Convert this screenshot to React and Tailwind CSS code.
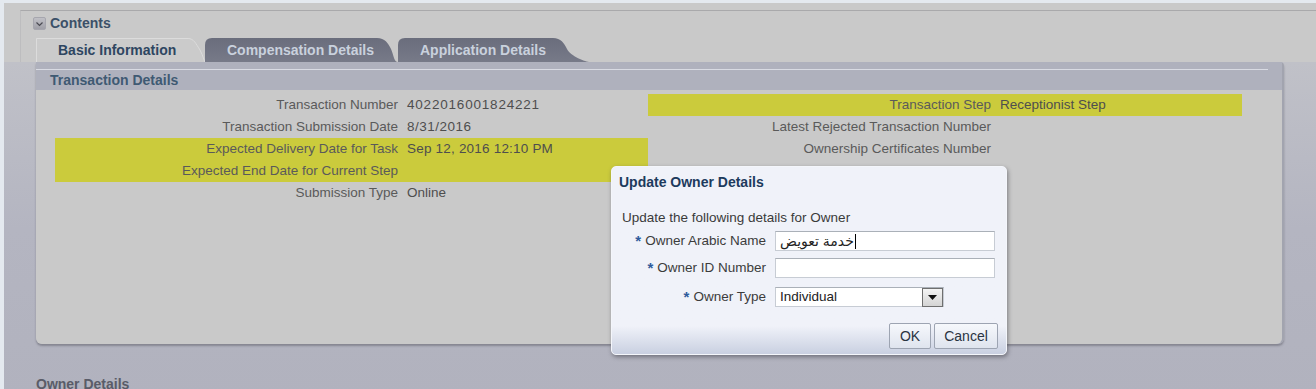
import React from "react";

function DarkTab({ width, label, curveStart }) {
  const w = width;
  const cs = curveStart;
  return (
    <div className="relative h-[24px] shrink-0" style={{ width: w }}>
      <svg className="absolute inset-0" width={w} height="24" viewBox={`0 0 ${w} 24`}>
        <defs>
          <linearGradient id={`g${w}`} x1="0" y1="0" x2="0" y2="1">
            <stop offset="0" stopColor="#6a6d7c" />
            <stop offset="1" stopColor="#777a88" />
          </linearGradient>
        </defs>
        <path
          d={`M0,24 V7 Q0,0 7,0 H${cs} C${cs + 8},0 ${cs + 11},5 ${cs + 14},11 C${cs + 17},18 ${w - 4},24 ${w},24 Z`}
          fill={`url(#g${w})`}
        />
      </svg>
      <div className="relative flex h-full items-center pl-[22px] pt-[1px] text-[14px] font-bold text-[#c9d1dd]">
        {label}
      </div>
    </div>
  );
}

function Row({ label, value, yellow, tracking = "" }) {
  return (
    <div className={`flex h-[22px] items-center ${yellow ? "bg-[#cbcb3c]" : ""}`}>
      <div className="w-[343px] shrink-0 text-right text-[#5a5a5a]">{label}</div>
      <div className={`pl-[9px] text-[#4e4e4e] ${tracking}`}>{value}</div>
    </div>
  );
}

function FieldLabel({ text }) {
  return (
    <div className="flex w-[154px] shrink-0 items-center justify-end text-[#3c3c3c]">
      <span className="mr-[4px] text-[15px] font-bold text-[#2f5b9c]">*</span>
      <span>{text}</span>
    </div>
  );
}

export default function App() {
  return (
    <div className="relative flex h-[389px] w-[1316px] overflow-hidden font-['Liberation_Sans','DejaVu_Sans',sans-serif] text-[13.5px]">
      <div className="w-[4px] shrink-0 bg-[#e4e9ef]" />
      <div className="flex min-w-0 flex-1 flex-col">
        <div className="h-[3px] shrink-0 bg-[#e4e9ef]" />
        {/* top section */}
        <div className="h-[59px] shrink-0 bg-[#c9c9c9] pt-[7px]">
          <div className="ml-[16px] h-[52px] border-t border-l border-t-[#a9a9ab] border-l-[#bdbdbf]">
            <div className="mt-[6px] flex h-[13px] items-center pl-[12px]">
              <div className="flex h-[13px] w-[13px] items-center justify-center rounded-[2px] border border-[#a6a6ae] bg-gradient-to-b from-[#c0c0c6] to-[#a0a0a8]">
                <svg width="9" height="9" viewBox="0 0 9 9">
                  <path d="M1.5,3.5 L4.5,6.5 L7.5,3.5" fill="none" stroke="#4a4a52" strokeWidth="1.2" />
                </svg>
              </div>
              <div className="ml-[4px] text-[14px] font-bold text-[#3b5068]">Contents</div>
            </div>
            <div className="ml-[15px] mt-[8px] flex h-[24px]">
              <div className="relative h-[24px] w-[169px] shrink-0">
                <svg className="absolute inset-0" width="169" height="24" viewBox="0 0 169 24">
                  <path d="M0.5,24 V0.5 H152 C158,0.5 160,6 164,12 C167,18 168,22 169,24" fill="#cbcbcb" stroke="#dcdcdc" strokeWidth="1" />
                </svg>
                <div className="relative flex h-full items-center pl-[22px] pt-[1px] text-[14px] font-bold text-[#2e4661]">
                  Basic Information
                </div>
              </div>
              <DarkTab width={193} label="Compensation Details" curveStart={172} />
              <DarkTab width={192} label="Application Details" curveStart={155} />
            </div>
          </div>
        </div>
        {/* panel region */}
        <div className="flex-1 bg-gradient-to-b from-[#c0c1c8] via-[#b4b5c1] to-[#b1b2be] pl-[32px]">
          <div className="w-[1248px] rounded-tr-[4px] rounded-b-[6px] border-r-2 border-[#a2a4af] shadow-[0_2px_2px_rgba(80,80,90,0.45)]">
            <div className="h-[28px] bg-[#afb1bd] pt-[7px]">
              <div className="mr-[14px] h-[1px] bg-[#d9dbe3]" />
              <div className="pl-[14px] text-[14px] font-bold text-[#3f5a73]">Transaction Details</div>
            </div>
            <div className="h-[254px] rounded-b-[6px] bg-[#c9c9c9] pl-[19px] pt-[4px]">
              <div className="flex">
                <div className="w-[593px]">
                  <Row label="Transaction Number" value="4022016001824221" tracking="tracking-[0.8px]" />
                  <Row label="Transaction Submission Date" value="8/31/2016" tracking="tracking-[0.5px]" />
                  <Row label="Expected Delivery Date for Task" value="Sep 12, 2016 12:10 PM" yellow tracking="tracking-[0.2px]" />
                  <Row label="Expected End Date for Current Step" value="" yellow />
                  <Row label="Submission Type" value="Online" />
                </div>
                <div className="w-[594px]">
                  <Row label="Transaction Step" value="Receptionist Step" yellow />
                  <Row label="Latest Rejected Transaction Number" value="" />
                  <Row label="Ownership Certificates Number" value="" />
                </div>
              </div>
            </div>
          </div>
          <div className="mt-[30px] text-[14px] font-bold text-[#5a5c68]">Owner Details</div>
        </div>
      </div>

      {/* modal */}
      <div className="absolute left-[611px] top-[166px] flex h-[189px] w-[396px] flex-col rounded-[5px] border border-[#f4f6fb] bg-gradient-to-b from-[#f0f2f9] from-85% to-[#c9d0e1] shadow-[1px_2px_4px_rgba(60,60,70,0.55)]">
        <div className="pl-[7px] pt-[5px] text-[14px] font-bold text-[#1d3b5d]">Update Owner Details</div>
        <div className="pl-[10px] pt-[15px] text-[#3a3a3a]">Update the following details for Owner</div>
        <div className="mt-[3px] flex h-[20px] items-center">
          <FieldLabel text="Owner Arabic Name" />
          <div className="ml-[9px] flex h-[20px] w-[220px] items-center border border-[#c7ccd4] border-t-[#aab0b8] bg-white pl-[4px] text-[14px] text-[#222]">
            <span>خدمة تعويض</span>
            <span className="ml-[1px] inline-block h-[15px] w-[1px] bg-black" />
          </div>
        </div>
        <div className="mt-[7px] flex h-[20px] items-center">
          <FieldLabel text="Owner ID Number" />
          <div className="ml-[9px] h-[20px] w-[220px] border border-[#c7ccd4] border-t-[#aab0b8] bg-white" />
        </div>
        <div className="mt-[9px] flex h-[20px] items-center">
          <FieldLabel text="Owner Type" />
          <div className="ml-[9px] flex h-[20px] w-[169px] items-center border border-[#c7ccd4] border-t-[#aab0b8] bg-white">
            <div className="flex-1 pl-[4px] text-[#222]">Individual</div>
            <div className="flex h-[19px] w-[21px] items-center justify-center border border-[#6f6f6f] bg-gradient-to-b from-[#f4f4f4] to-[#d4d4d4]">
              <svg width="9" height="5" viewBox="0 0 9 5">
                <path d="M0,0 H9 L4.5,5 Z" fill="#111" />
              </svg>
            </div>
          </div>
        </div>
        <div className="mt-[16px] flex justify-end gap-[3px] pr-[8px]">
          <div className="flex h-[26px] w-[42px] items-center justify-center rounded-[2px] border border-[#9da4b2] bg-gradient-to-b from-[#f6f8fc] to-[#dfe4ee] text-[14px] text-[#2a3442]">OK</div>
          <div className="flex h-[26px] w-[64px] items-center justify-center rounded-[2px] border border-[#9da4b2] bg-gradient-to-b from-[#f6f8fc] to-[#dfe4ee] text-[14px] text-[#2a3442]">Cancel</div>
        </div>
      </div>
    </div>
  );
}
